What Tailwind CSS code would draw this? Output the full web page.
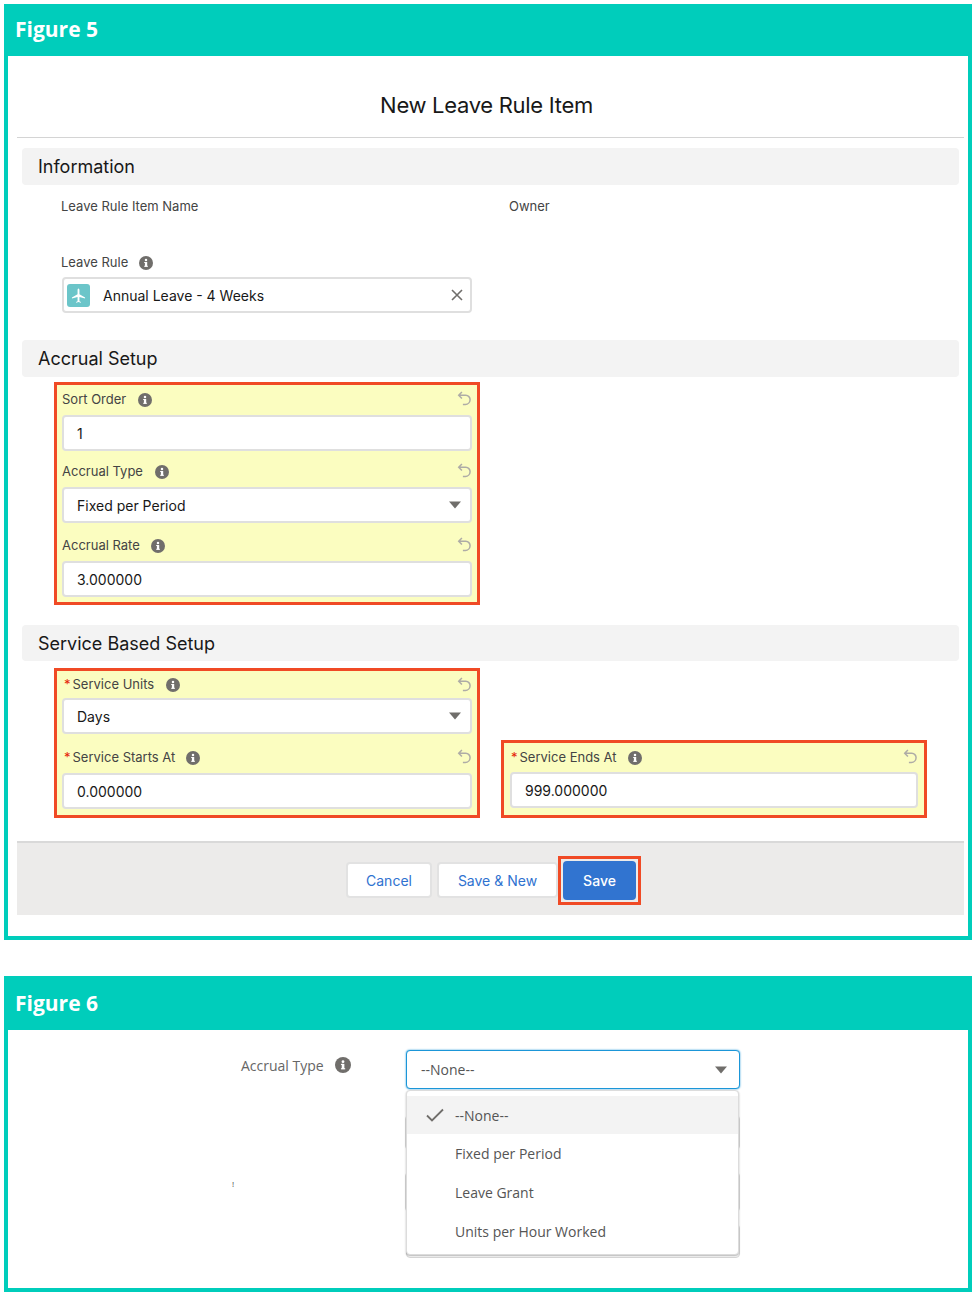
<!DOCTYPE html>
<html lang="en">
<head>
  <meta charset="UTF-8" />
  <title>Figures</title>
  <script src="https://cdn.jsdelivr.net/npm/@tailwindcss/browser@4"></script>
</head>
<body class="bg-white font-['Inter',sans-serif] text-[#181818]">
  <svg class="hidden">
    <symbol id="info" viewBox="0 0 14 14"><circle cx="7" cy="7" r="7" fill="#706e6b"/><rect x="5.9" y="6" width="2.3" height="4.6" fill="#fff"/><rect x="5.2" y="6" width="2" height="1" fill="#fff"/><rect x="5.2" y="9.8" width="3.7" height="1" fill="#fff"/><circle cx="7" cy="4.1" r="1.25" fill="#fff"/></symbol>
    <symbol id="undo" viewBox="0 0 14 14"><path d="M4.6 1 1.6 4l3 3M1.6 4h6.6a4 4 0 0 1 4 4.2 4.4 4.4 0 0 1-4.4 4.3H5.5" fill="none" stroke="#aeaca6" stroke-width="1.4"/></symbol>
    <symbol id="caret" viewBox="0 0 12 8"><path d="M0 .5h12L6 7.5z" fill="#706e6b"/></symbol>
  </svg>

  <div class="px-[4px] pt-[4px]">
    <!-- Figure 5 -->
    <section class="w-[968px] h-[936px] border-4 border-[#00cdbb]">
      <h2 class="h-[48px] bg-[#00cdbb] pl-[7px] pb-[4px] flex items-center text-white text-[21px] font-bold font-['Open_Sans',sans-serif]">Figure 5</h2>

      <div class="ml-[9px] mr-[4px] h-[82px] border-b border-[#d4d4d4] flex items-center justify-center pt-[17px] text-[22px] tracking-[-0.3px] pr-[8px]">New Leave Rule Item</div>

      <div class="ml-[14px] w-[937px] h-[37px] mt-[10px] bg-[#f3f3f3] rounded-[4px] pl-[16px] flex items-center text-[18px]">Information</div>
      <div class="ml-[53px] mt-[13px] h-[18px] flex items-center text-[13px] text-[#444]">
        <span class="w-[448px]">Leave Rule Item Name</span>
        <span>Owner</span>
      </div>
      <div class="ml-[53px] mt-[38px] h-[18px] flex items-center gap-[11px] text-[13px] text-[#444]">
        Leave Rule <svg class="size-[14px]"><use href="#info"/></svg>
      </div>
      <div class="ml-[54px] w-[410px] h-[36px] mt-[5px] bg-white border-2 border-[#dfdfdf] rounded-[4px] flex items-center pl-[3px] pr-[7px] text-[14px]">
        <span class="size-[23px] bg-[#6bc5c9] rounded-[3px] flex items-center justify-center">
          <svg class="size-[15px]" viewBox="0 0 16 16"><path d="M8 .5c.7 0 1 1 1 2v4.2l6 3.3v1.2l-6-1.5V14l1.6 1v.6L8 15l-2.6.6V15L7 14V9.700L1 11.200V10l6-3.300V2.500c0-1 .3-2 1-2z" fill="#fff"/></svg>
        </span>
        <span class="ml-[13px]">Annual Leave - 4 Weeks</span>
        <svg class="size-[12px] ml-auto" viewBox="0 0 12 12"><path d="M1 1l10 10M11 1 1 11" stroke="#706e6b" stroke-width="1.6"/></svg>
      </div>

      <div class="ml-[14px] w-[937px] h-[37px] mt-[27px] bg-[#f3f3f3] rounded-[4px] pl-[16px] flex items-center text-[18px]">Accrual Setup</div>
      <!-- changed fields -->
      <div class="ml-[46px] w-[426px] h-[223px] mt-[5px] border-[3px] border-[#f04a25] bg-[#fbfdc0] px-[5px]">
        <div class="h-[30px] flex items-center text-[13px] text-[#444]">
          <span>Sort Order</span><svg class="size-[14px] ml-[12px]"><use href="#info"/></svg><svg class="size-[15px] ml-auto mb-[3px]"><use href="#undo"/></svg>
        </div>
        <div class="h-[36px] bg-white border-2 border-[#dfdfdf] rounded-[4px] pl-[13px] flex items-center text-[14px]">1</div>
        <div class="h-[30px] mt-[6px] flex items-center text-[13px] text-[#444]">
          <span>Accrual Type</span><svg class="size-[14px] ml-[12px]"><use href="#info"/></svg><svg class="size-[15px] ml-auto mb-[3px]"><use href="#undo"/></svg>
        </div>
        <div class="h-[36px] bg-white border-2 border-[#dfdfdf] rounded-[4px] pl-[13px] pr-[9px] flex items-center justify-between text-[14px]">Fixed per Period<svg class="w-[12px] h-[8px]"><use href="#caret"/></svg></div>
        <div class="h-[30px] mt-[8px] flex items-center text-[13px] text-[#444]">
          <span>Accrual Rate</span><svg class="size-[14px] ml-[11px]"><use href="#info"/></svg><svg class="size-[15px] ml-auto mb-[3px]"><use href="#undo"/></svg>
        </div>
        <div class="h-[36px] bg-white border-2 border-[#dfdfdf] rounded-[4px] pl-[13px] flex items-center text-[14px]">3.000000</div>
      </div>

      <div class="ml-[14px] w-[937px] h-[36px] mt-[20px] bg-[#f3f3f3] rounded-[4px] pl-[16px] flex items-center text-[18px]">Service Based Setup</div>
      <div class="ml-[46px] mt-[7px] flex items-end gap-[21px]">
        <div class="w-[426px] h-[150px] border-[3px] border-[#f04a25] bg-[#fbfdc0] px-[5px]">
          <div class="h-[27px] flex items-center text-[13px] text-[#444]">
            <span class="text-[#e52207] ml-[2px] mr-[2px]">*</span><span>Service Units</span><svg class="size-[14px] ml-[12px]"><use href="#info"/></svg><svg class="size-[15px] ml-auto"><use href="#undo"/></svg>
          </div>
          <div class="h-[36px] bg-white border-2 border-[#dfdfdf] rounded-[4px] pl-[13px] pr-[9px] flex items-center justify-between text-[14px]">Days<svg class="w-[12px] h-[8px]"><use href="#caret"/></svg></div>
          <div class="h-[30px] mt-[9px] flex items-center text-[13px] text-[#444]">
            <span class="text-[#e52207] ml-[2px] mr-[2px]">*</span><span>Service Starts At</span><svg class="size-[14px] ml-[11px]"><use href="#info"/></svg><svg class="size-[15px] ml-auto mb-[3px]"><use href="#undo"/></svg>
          </div>
          <div class="h-[36px] bg-white border-2 border-[#dfdfdf] rounded-[4px] pl-[13px] flex items-center text-[14px]">0.000000</div>
        </div>
        <div class="w-[426px] h-[78px] border-[3px] border-[#f04a25] bg-[#fbfdc0] px-[6px]">
          <div class="h-[29px] flex items-center text-[13px] text-[#444]">
            <span class="text-[#e52207] ml-[1px] mr-[2px]">*</span><span>Service Ends At</span><svg class="size-[14px] ml-[11px]"><use href="#info"/></svg><svg class="size-[15px] ml-auto mb-[3px]"><use href="#undo"/></svg>
          </div>
          <div class="h-[36px] bg-white border-2 border-[#dfdfdf] rounded-[4px] pl-[13px] flex items-center text-[14px]">999.000000</div>
        </div>
      </div>

      <footer class="ml-[9px] mr-[4px] h-[74px] mt-[23px] bg-[#ecebea] border-t-2 border-[#d9d9d9] flex items-start pl-[329px] pt-[13px] text-[14px]">
        <button class="w-[86px] h-[36px] mt-[6px] bg-white border-2 border-[#e2e2e2] rounded-[4px] text-[#2f72d0]">Cancel</button>
        <button class="w-[121px] h-[36px] mt-[6px] ml-[5px] bg-white border-2 border-[#e2e2e2] rounded-[4px] text-[#2f72d0]">Save &amp; New</button>
        <div class="w-[83px] h-[49px] border-[3px] border-[#f04a25] bg-[#ecebea] p-[2px]">
          <button class="w-full h-full bg-[#3174d0] rounded-[4px] text-white font-medium">Save</button>
        </div>
      </footer>
    </section>

    <!-- Figure 6 -->
    <section class="mt-[36px] w-[968px] h-[316px] border-4 border-[#00cdbb] font-['Open_Sans',sans-serif] text-[#555]">
      <h2 class="h-[50px] bg-[#00cdbb] pl-[7px] pb-[2px] flex items-center text-white text-[21px] font-bold">Figure 6</h2>
      <div class="relative pt-[20px]">
        <div class="flex items-start">
          <div class="ml-[233px] w-[165px] h-[30px] flex items-center gap-[11px] text-[14px] text-[#666]">
            Accrual Type <svg class="size-[16px]"><use href="#info"/></svg>
          </div>
          <div class="w-[334px] h-[39px] bg-white border border-[#1b96d8] rounded-[4px] shadow-[0_0_2px_#1b96d8] pl-[14px] pr-[12px] flex items-center justify-between text-[14px]">--None--<svg class="w-[12px] h-[8px]"><use href="#caret"/></svg></div>
        </div>
        <!-- inputs behind the open menu -->
        <div class="absolute left-[397px] top-[85px] w-[335px] h-[35px] border border-[#d8d8d8] rounded-[4px]"></div>
        <div class="absolute left-[397px] top-[142px] w-[335px] h-[40px] border border-[#d8d8d8] rounded-[4px]"></div>
        <div class="absolute left-[398px] top-[194px] w-[334px] h-[34px] border border-[#d8d8d8] rounded-[4px]"></div>
        <span class="absolute left-[224px] top-[148px] text-[8px] text-[#444]">!</span>
        <!-- open menu -->
        <ul class="absolute left-[398px] top-[60px] w-[333px] h-[165px] bg-white border border-[#dcdcdc] rounded-[4px] shadow-[0_1px_2px_rgba(0,0,0,0.3)] pt-[5px] text-[14px]">
          <li class="h-[38px] bg-[#f3f3f3] flex items-center pl-[19px]">
            <svg class="w-[18px] h-[14px] mr-[11px]" viewBox="0 0 18 14"><path d="M1 7.500l5 5L17 1.500" fill="none" stroke="#706e6b" stroke-width="1.800"/></svg>--None--
          </li>
          <li class="h-[39px] pl-[48px] flex items-center">Fixed per Period</li>
          <li class="h-[39px] pl-[48px] flex items-center">Leave Grant</li>
          <li class="h-[39px] pl-[48px] flex items-center">Units per Hour Worked</li>
        </ul>
      </div>
    </section>
  </div>
</body>
</html>
